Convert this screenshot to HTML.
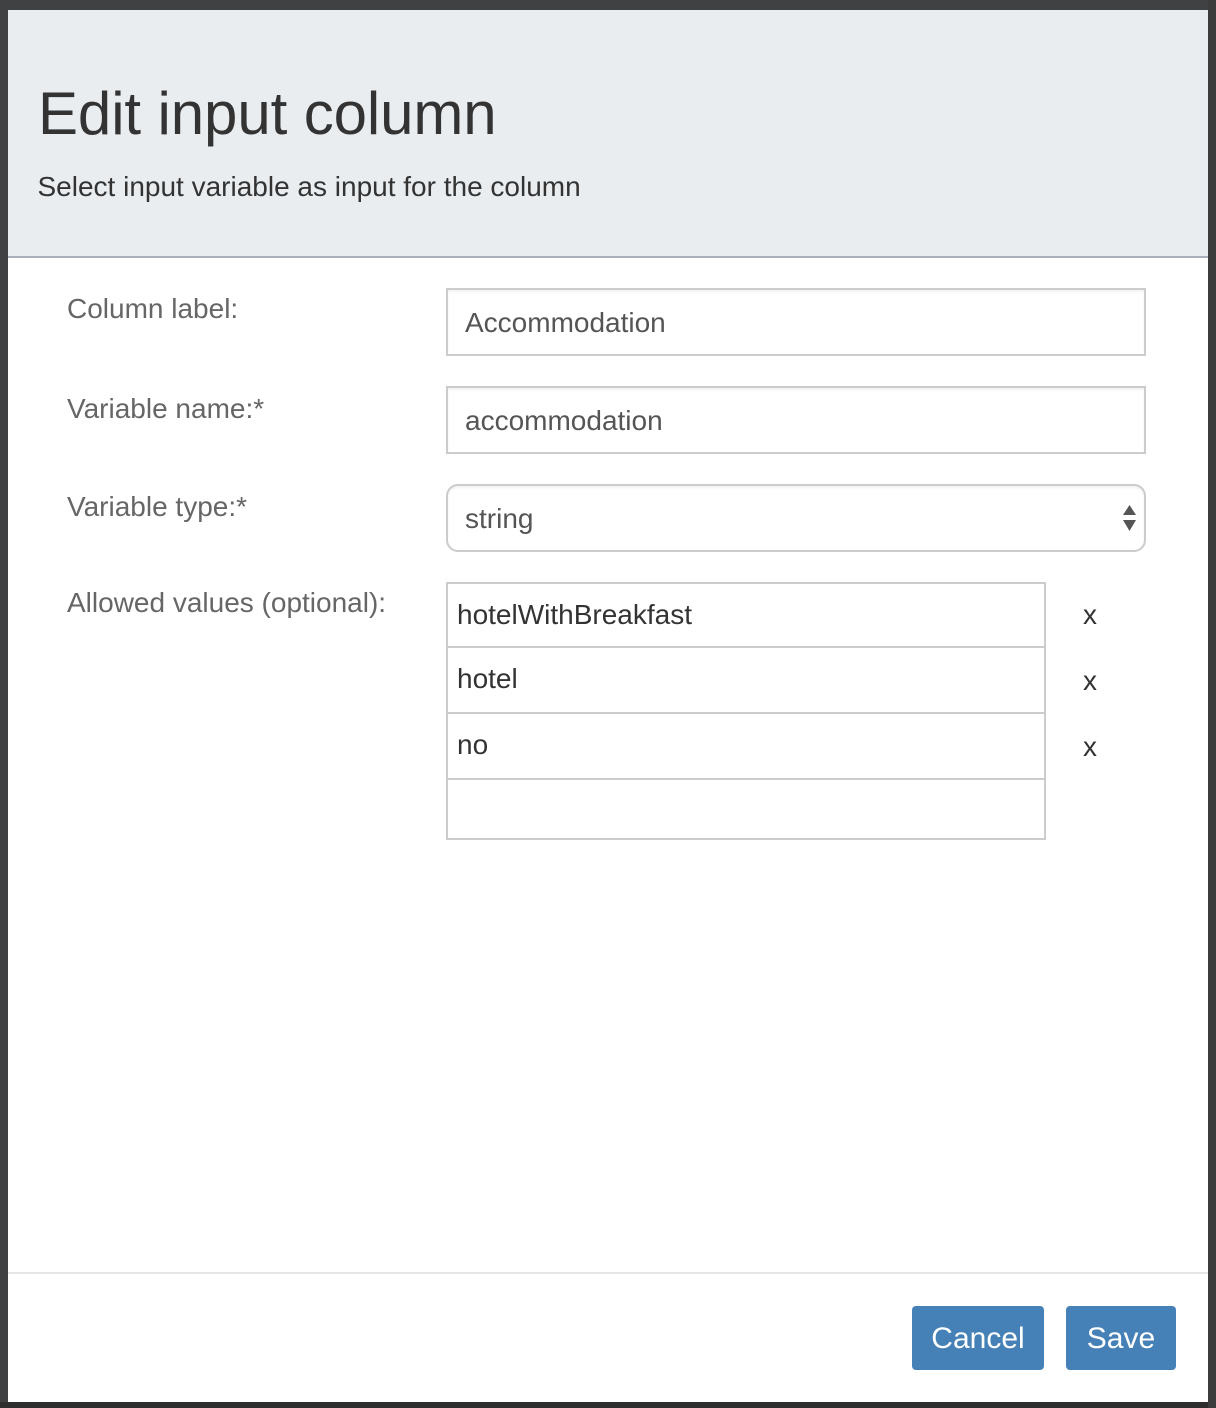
<!DOCTYPE html>
<html>
<head>
<meta charset="utf-8">
<style>
html,body{margin:0;padding:0;width:1216px;height:1408px;overflow:hidden;background:#404143;}
body{position:relative;font-family:"Liberation Sans",sans-serif;}
.a{position:absolute;}
.t{position:absolute;font-size:28px;line-height:40px;white-space:nowrap;}
.l{color:#666;}
.i{color:#555;}
.d{color:#333;}
.box{position:absolute;box-sizing:border-box;border:2px solid #ccc;background:#fff;}
.sh{box-shadow:inset 0 2px 2px rgba(0,0,0,.05);}
.btn{position:absolute;background:#4580b7;border-radius:4px;color:#fff;font-size:30px;line-height:66px;text-align:center;}
</style>
</head>
<body>
<div class="a" style="left:0;top:1402px;width:1216px;height:6px;background:#2e2e2e"></div>
<div class="a" style="left:1208px;top:0;width:8px;height:1408px;background:#3c3c3c"></div>
<div class="a" style="left:8px;top:10px;width:1200px;height:1392px;background:#fff"></div>
<div class="a" style="left:8px;top:10px;width:1200px;height:246px;background:#e9edf0"></div>
<div class="a" style="left:8px;top:256px;width:1200px;height:2px;background:#a8b0bd"></div>

<div class="a" style="left:38px;top:81px;font-size:60px;line-height:66px;letter-spacing:-0.1px;color:#333;white-space:nowrap">Edit input column</div>
<div class="t d" style="left:37.5px;top:167px">Select input variable as input for the column</div>

<div class="t l" style="left:67px;top:289px">Column label:</div>
<div class="box sh" style="left:446px;top:288px;width:700px;height:68px"></div>
<div class="t i" style="left:465px;top:303px">Accommodation</div>

<div class="t l" style="left:67px;top:389px">Variable name:*</div>
<div class="box sh" style="left:446px;top:386px;width:700px;height:68px"></div>
<div class="t i" style="left:465px;top:401px">accommodation</div>

<div class="t l" style="left:67px;top:487px">Variable type:*</div>
<div class="box sh" style="left:446px;top:484px;width:700px;height:68px;border-radius:12px"></div>
<div class="t i" style="left:465px;top:499px">string</div>
<svg class="a" style="left:1120px;top:502px" width="20" height="32" viewBox="0 0 20 32"><path d="M3 13 L9.5 3 L16 13 Z M3 18 L16 18 L9.5 29 Z" fill="#555"/></svg>

<div class="t l" style="left:67px;top:583px">Allowed values (optional):</div>
<div class="box" style="left:446px;top:582px;width:600px;height:258px"></div>
<div class="a" style="left:448px;top:646px;width:596px;height:2px;background:#ccc"></div>
<div class="a" style="left:448px;top:712px;width:596px;height:2px;background:#ccc"></div>
<div class="a" style="left:448px;top:778px;width:596px;height:2px;background:#ccc"></div>
<div class="t d" style="left:457px;top:595px">hotelWithBreakfast</div>
<div class="t d" style="left:457px;top:659px">hotel</div>
<div class="t d" style="left:457px;top:725px">no</div>
<div class="t d" style="left:1083px;top:595px">x</div>
<div class="t d" style="left:1083px;top:661px">x</div>
<div class="t d" style="left:1083px;top:727px">x</div>

<div class="a" style="left:8px;top:1272px;width:1200px;height:2px;background:#e5e5e5"></div>
<div class="btn" style="left:912px;top:1306px;width:132px;height:64px">Cancel</div>
<div class="btn" style="left:1066px;top:1306px;width:110px;height:64px">Save</div>
</body>
</html>
